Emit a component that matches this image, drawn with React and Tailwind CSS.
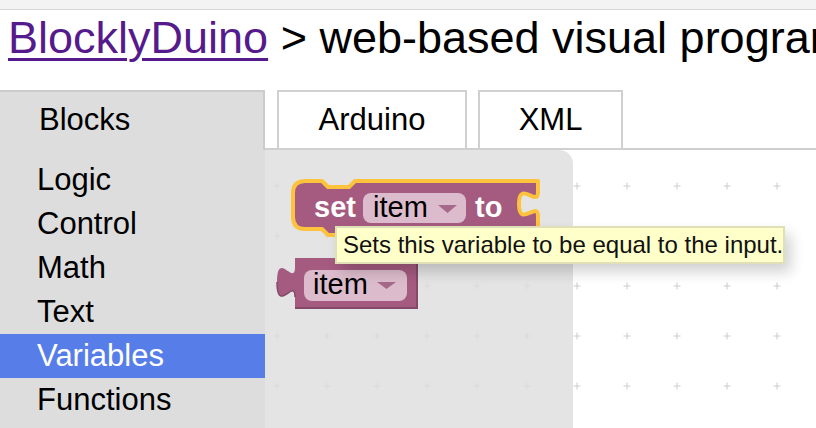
const categories = ['Logic', 'Control', 'Math', 'Text', 'Variables', 'Functions']

const gridX = [277, 327, 377, 427, 477, 527, 577, 627, 677, 727, 777]
const gridY = [186, 236, 286, 336, 386]

function Grid() {
  return (
    <svg className="absolute inset-0" width="551" height="278" viewBox="265 150 551 278">
      {gridX.map((x) =>
        gridY.map((y) => (
          <g key={x + '-' + y} stroke="#cccccc" strokeWidth="1">
            <line x1={x - 3.5} y1={y} x2={x + 3.5} y2={y} />
            <line x1={x} y1={y - 3.5} x2={x} y2={y + 3.5} />
          </g>
        ))
      )}
    </svg>
  )
}

function Blocks() {
  const font = { fontFamily: '"Liberation Sans", Arial, sans-serif' }
  return (
    <svg className="absolute inset-0" width="551" height="278" viewBox="265 150 551 278" style={font}>
      {/* variables_set, selected */}
      <path
        d="M305 181 H322 L328 187 H349 L355 181 H538 V192 c0,16 -19,-13 -19,12 s19,-4 19,12 V229 H355 L349 235 H328 L322 229 H305 Q293 229 293 217 V193 Q293 181 305 181 Z"
        fill="#a55b80"
        stroke="#fdc33d"
        strokeWidth="4"
        strokeLinejoin="round"
      />
      <text x="314" y="217" fontSize="29" fontWeight="bold" fill="#ffffff">set</text>
      <rect x="363" y="193" width="103" height="30" rx="8" fill="#dcbccc" />
      <text x="373" y="217" fontSize="29" fill="#000000">item</text>
      <path d="M438 205 H457 L447.5 213 Z" fill="#a7698a" />
      <text x="475" y="217" fontSize="29" fontWeight="bold" fill="#ffffff">to</text>

      {/* variables_get */}
      <path
        d="M295 258 H417 V308 H295 V297 c0,-20 -18,18 -18,-15 s18,5 18,-15 Z"
        fill="#a55b80"
      />
      <path d="M417 258 V308 H295" fill="none" stroke="#854868" strokeWidth="2" />
      <path d="M295 297 c0,-20 -18,18 -18,-15" fill="none" stroke="#854868" strokeWidth="1.5" />
      <rect x="304" y="270" width="103" height="31" rx="8" fill="#dcbccc" />
      <text x="313" y="294" fontSize="29" fill="#000000">item</text>
      <path d="M377 282 H396 L386.5 289 Z" fill="#a7698a" />
    </svg>
  )
}

export default function App() {
  return (
    <div className="h-[428px] overflow-hidden bg-white font-['Liberation_Sans',Arial,sans-serif] text-black">
      <div className="h-[10px] bg-[#f3f3f3] border-b border-[#d6d6d6]" />
      <div className="h-[80px] pl-[8px] pt-[5px] text-[45px] leading-[45px] whitespace-nowrap overflow-hidden">
        <a href="#" className="text-[#551a8b] underline decoration-[3px] underline-offset-[5px]">
          BlocklyDuino
        </a>
        <span> &gt; web-based visual programming editor for arduino</span>
      </div>

      <div className="flex h-[338px]">
        <div className="w-[265px] shrink-0 flex flex-col bg-[#dddddd]">
          <div className="h-[60px] border-t-2 border-r-2 border-[#cccccc] pl-[39px] text-[31px] leading-[56px]">
            Blocks
          </div>
          <div className="pt-[8px]">
            {categories.map((c) => (
              <div
                key={c}
                className={
                  c === 'Variables'
                    ? 'h-[44px] leading-[44px] pl-[37px] text-[31px] bg-[#577ee8] text-white'
                    : 'h-[44px] leading-[44px] pl-[37px] text-[31px]'
                }
              >
                {c}
              </div>
            ))}
          </div>
        </div>

        <div className="flex-1 flex flex-col">
          <div className="h-[60px] flex gap-[11px] pl-[12px] border-b-2 border-[#cfcfcf]">
            <div className="w-[190px] h-[60px] border-2 border-[#d0d0d0] bg-white flex items-center justify-center text-[31px]">
              Arduino
            </div>
            <div className="w-[145px] h-[60px] border-2 border-[#d0d0d0] bg-white flex items-center justify-center text-[31px]">
              XML
            </div>
          </div>

          <div className="relative flex-1 bg-white">
            <Grid />
            <div className="absolute left-0 top-0 bottom-0 w-[308px] rounded-tr-[14px] bg-[rgba(221,221,221,0.8)]" />
            <Blocks />
            <div className="absolute left-[70px] top-[76px] w-[450px] h-[38px] border-2 border-[#e0e0b8] bg-[#ffffc9] pl-[6px] text-[24px] leading-[33px] text-[#111] whitespace-nowrap shadow-[6px_8px_14px_rgba(0,0,0,0.18)]">
              Sets this variable to be equal to the input.
            </div>
          </div>
        </div>
      </div>
    </div>
  )
}
